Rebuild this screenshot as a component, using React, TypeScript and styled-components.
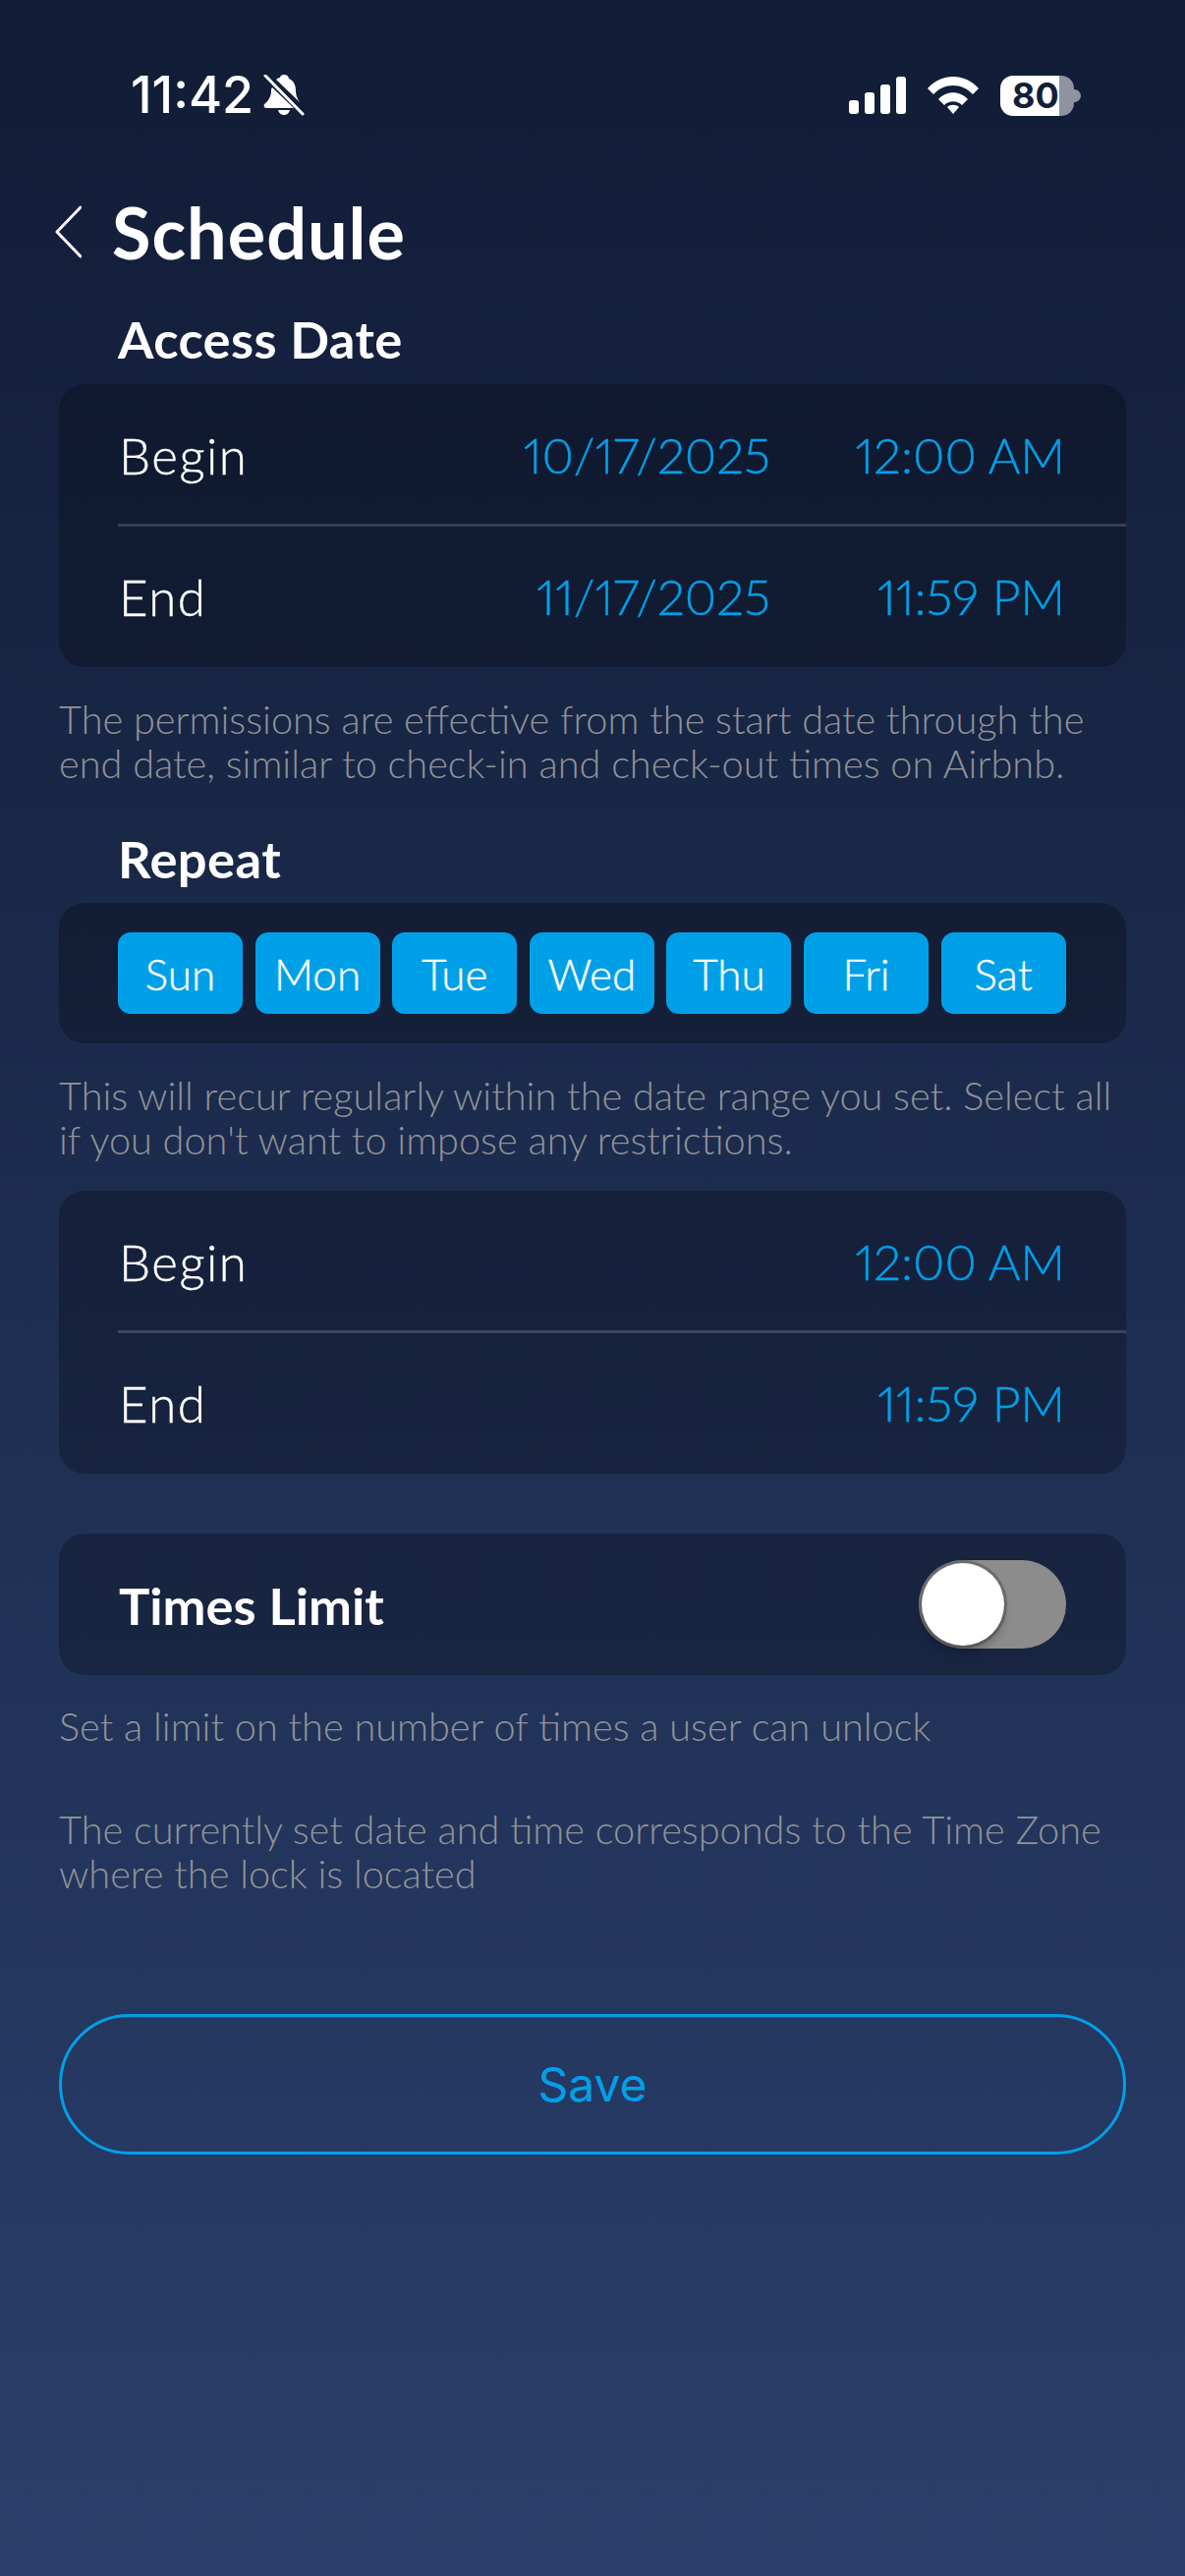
import React, { FC } from "react";
import styled, { createGlobalStyle } from "styled-components";

const GlobalStyle = createGlobalStyle`
  html, body {
    margin: 0;
    padding: 0;
    background: #111c36;
  }
  * {
    box-sizing: border-box;
  }
`;

const DAYS = ["Sun", "Mon", "Tue", "Wed", "Thu", "Fri", "Sat"];

const Page = styled.div`
  width: 1206px;
  height: 2622px;
  overflow: hidden;
  background: linear-gradient(180deg, #111c36 0%, #2a3f6b 100%);
  font-family: Lato, "Noto Sans", sans-serif;
  font-variant-numeric: proportional-nums;
  color: #fff;
  display: flex;
  flex-direction: column;
`;

const StatusBar = styled.div`
  height: 40px;
  margin-top: 77px;
  padding: 0 113px 0 133px;
  display: flex;
  align-items: center;
  justify-content: space-between;
`;

const TimeGroup = styled.div`
  display: flex;
  align-items: center;
  gap: 10px;
`;

const Clock = styled.span`
  font-family: Inter, sans-serif;
  font-size: 52px;
  font-weight: 500;
  line-height: 40px;
`;

const StatusIcons = styled.div`
  display: flex;
  align-items: center;
  gap: 22px;
`;

const Battery = styled.div`
  position: relative;
  width: 75px;
  height: 41px;
  border-radius: 13px;
  background: linear-gradient(90deg, #fff 0 80%, #8e93a0 80% 100%);
  color: #131f3a;
  font-family: Inter, sans-serif;
  font-size: 36px;
  font-weight: 700;
  line-height: 41px;
  padding-left: 12px;
  &::after {
    content: "";
    position: absolute;
    top: 14px;
    right: -7px;
    width: 7px;
    height: 13px;
    border-radius: 0 8px 8px 0;
    background: #8e93a0;
  }
`;

const Header = styled.div`
  margin-top: 91px;
  padding-left: 56px;
  height: 56px;
  display: flex;
  align-items: center;
  gap: 31px;
`;

const Title = styled.h1`
  margin: 0;
  font-size: 72px;
  font-weight: 700;
  letter-spacing: 1px;
  line-height: 56px;
`;

const SectionTitle = styled.h2<{ $top: number }>`
  margin: ${(p) => p.$top}px 0 0;
  padding-left: 120px;
  font-size: 52.5px;
  font-weight: 700;
  letter-spacing: 0.4px;
  line-height: 46px;
`;

const Card = styled.div<{ $top: number }>`
  margin: ${(p) => p.$top}px 60px 0;
  background: rgba(0, 0, 0, 0.25);
  border-radius: 26px;
  overflow: hidden;
`;

const Row = styled.div`
  position: relative;
  height: 144px;
  padding: 0 62px 0 61px;
  display: flex;
  align-items: center;
  justify-content: space-between;
  font-size: 51px;
  font-weight: 300;
  letter-spacing: 1.5px;
  -webkit-text-stroke: 0.4px currentColor;
  & + &::before {
    content: "";
    position: absolute;
    top: -2px;
    left: 60px;
    right: 0;
    height: 3px;
    background: rgba(255, 255, 255, 0.16);
  }
`;

const Values = styled.div`
  display: flex;
  justify-content: flex-end;
  font-size: 50px;
  letter-spacing: 0;
  color: #00a0e9;
`;

const DateValue = styled.span`
  margin-right: 84px;
`;

const TimeValue = styled.span`
  width: 216px;
  text-align: right;
`;

const DayList = styled.div`
  padding: 30px 60px;
  display: flex;
  gap: 12.6px;
`;

const DayButton = styled.div`
  width: 127px;
  height: 83px;
  border-radius: 13px;
  background: #00a0e9;
  display: flex;
  align-items: center;
  justify-content: center;
  font-size: 44px;
  font-weight: 300;
  -webkit-text-stroke: 0.4px currentColor;
`;

const Note = styled.p<{ $top: number }>`
  margin: ${(p) => p.$top}px 60px 0;
  color: #919397;
  font-size: 39.7px;
  font-weight: 300;
  line-height: 45px;
  white-space: nowrap;
`;

const LimitLabel = styled.span`
  font-size: 52.5px;
  font-weight: 700;
  letter-spacing: 0;
  -webkit-text-stroke: 0;
`;

const Toggle = styled.div`
  position: relative;
  width: 150px;
  height: 90px;
  margin-right: -1px;
  border-radius: 45px;
  background: #8c8c8c;
`;

const Thumb = styled.div`
  position: absolute;
  top: 3px;
  left: 3px;
  width: 84px;
  height: 84px;
  border-radius: 50%;
  background: #fff;
  box-shadow: 0 8px 10px rgba(0, 0, 0, 0.2), 0 0 0 3px rgba(80, 80, 80, 0.5);
`;

const SaveButton = styled.button`
  display: block;
  width: 1086px;
  height: 143px;
  margin: 121px 60px 0;
  padding: 0;
  border: 3px solid #00a0e9;
  border-radius: 72px;
  background: transparent;
  color: #00a0e9;
  font-family: Inter, sans-serif;
  font-size: 48px;
  font-weight: 400;
`;

const SignalIcon: FC = () => (
  <svg width="58" height="38" viewBox="0 0 58 38">
    <rect x="0" y="24" width="10" height="14" rx="3" fill="#fff" />
    <rect x="16" y="16" width="10" height="22" rx="3" fill="#fff" />
    <rect x="32" y="8" width="10" height="30" rx="3" fill="#fff" />
    <rect x="48" y="0" width="10" height="38" rx="3" fill="#fff" />
  </svg>
);

const WifiIcon: FC = () => (
  <svg width="52" height="38" viewBox="0 0 52 38" fill="#fff">
    <path d="M0 12 C14 -4 38 -4 52 12 L46 18 C35 6 17 6 6 18 Z" />
    <path d="M11 23 C19 14 33 14 41 23 L35 29 C30 24 22 24 17 29 Z" />
    <path d="M20 31 C23 28 29 28 32 31 L26 38 Z" />
  </svg>
);

const BellOffIcon: FC = () => (
  <svg width="42" height="42" viewBox="0 0 42 42" fill="#fff">
    <path d="M21 0 C24 0 26 2 26 4 C31 6 33 11 33 16 C33 20 34 24 37 28 L13 5 C15 3 17 3 17 3 C17 1 19 0 21 0 Z" />
    <path d="M9 13 L31 34 L3 34 C1 34 0 32 1 30 C5 27 8 22 8 17 C8 15 8 14 9 13 Z" />
    <path d="M15 36 L27 36 C26 40 23 41 21 41 C19 41 16 40 15 36 Z" />
    <path d="M2 1 L40 40" stroke="#fff" strokeWidth="3" strokeLinecap="round" />
  </svg>
);

const BackIcon: FC = () => (
  <svg width="27" height="56" viewBox="0 0 27 56" fill="none">
    <path d="M26 3 L2 28 L26 53" stroke="#fff" strokeWidth="3" strokeLinecap="round" strokeLinejoin="round" />
  </svg>
);

const App: FC = () => {
  return (
    <Page>
      <GlobalStyle />
      <StatusBar>
        <TimeGroup>
          <Clock>11:42</Clock>
          <BellOffIcon />
        </TimeGroup>
        <StatusIcons>
          <SignalIcon />
          <WifiIcon />
          <Battery>80</Battery>
        </StatusIcons>
      </StatusBar>

      <Header>
        <BackIcon />
        <Title>Schedule</Title>
      </Header>

      <SectionTitle $top={58}>Access Date</SectionTitle>
      <Card $top={23}>
        <Row>
          Begin
          <Values>
            <DateValue>10/17/2025</DateValue>
            <TimeValue>12:00 AM</TimeValue>
          </Values>
        </Row>
        <Row>
          End
          <Values>
            <DateValue>11/17/2025</DateValue>
            <TimeValue>11:59 PM</TimeValue>
          </Values>
        </Row>
      </Card>
      <Note $top={30}>
        The permissions are effective from the start date through the
        <br />
        end date, similar to check-in and check-out times on Airbnb.
      </Note>

      <SectionTitle $top={52}>Repeat</SectionTitle>
      <Card $top={22}>
        <DayList>
          {DAYS.map((day) => (
            <DayButton key={day}>{day}</DayButton>
          ))}
        </DayList>
      </Card>
      <Note $top={30}>
        This will recur regularly within the date range you set. Select all
        <br />
        if you don't want to impose any restrictions.
      </Note>

      <Card $top={30}>
        <Row>
          Begin
          <Values>
            <TimeValue>12:00 AM</TimeValue>
          </Values>
        </Row>
        <Row>
          End
          <Values>
            <TimeValue>11:59 PM</TimeValue>
          </Values>
        </Row>
      </Card>

      <Card $top={61}>
        <Row>
          <LimitLabel>Times Limit</LimitLabel>
          <Toggle>
            <Thumb />
          </Toggle>
        </Row>
      </Card>
      <Note $top={29}>Set a limit on the number of times a user can unlock</Note>
      <Note $top={60}>
        The currently set date and time corresponds to the Time Zone
        <br />
        where the lock is located
      </Note>

      <SaveButton>Save</SaveButton>
    </Page>
  );
};

export default App;
